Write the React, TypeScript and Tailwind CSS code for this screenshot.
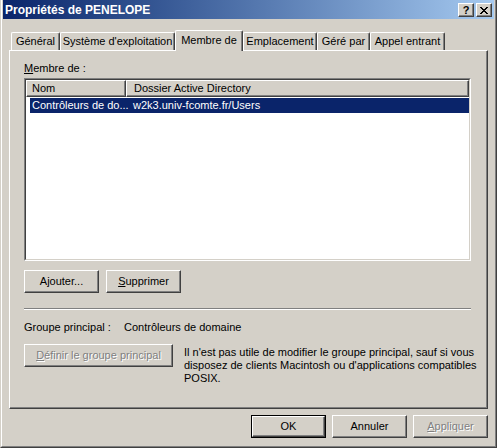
import React from "react";

const raised =
  "border border-t-white border-l-white border-r-[#404040] border-b-[#404040] shadow-[inset_-1px_-1px_0_#808080]";

function Btn({
  children,
  w = "w-[75px]",
  def = false,
  disabled = false,
}: {
  children: React.ReactNode;
  w?: string;
  def?: boolean;
  disabled?: boolean;
}) {
  const inner = (
    <div
      className={`h-full w-full flex items-center justify-center bg-[#d4d0c8] ${raised} ${
        disabled ? "text-[#808080] [text-shadow:1px_1px_0_#ffffff]" : "text-black"
      }`}
    >
      {children}
    </div>
  );
  if (def) {
    return <div className={`${w} h-[23px] border border-black`}>{inner}</div>;
  }
  return <div className={`${w} h-[23px]`}>{inner}</div>;
}

function Tab({
  label,
  w,
  selected = false,
}: {
  label: string;
  w: string;
  selected?: boolean;
}) {
  if (selected) {
    return (
      <div
        className={`${w} h-[21px] -mb-[1px] relative z-10 bg-[#d4d0c8] border-l border-t border-r border-l-white border-t-white border-r-[#404040] rounded-tl-[2px] rounded-tr-[2px] shadow-[inset_-1px_0_0_#808080] flex items-start justify-center pt-[3px]`}
      >
        {label}
      </div>
    );
  }
  return (
    <div
      className={`${w} h-[18px] mt-[2px] bg-[#d4d0c8] border-l border-t border-r border-l-white border-t-white border-r-[#404040] rounded-tl-[2px] rounded-tr-[2px] shadow-[inset_-1px_0_0_#808080] flex items-start justify-center pt-[2px]`}
    >
      {label}
    </div>
  );
}

export default function App() {
  return (
    <div className="w-[497px] h-[448px] bg-[#d4d0c8] overflow-hidden font-['Liberation_Sans',Arial,sans-serif] text-[11px] leading-[13px] text-black select-none">
      <div className="w-full h-full border-r border-b border-r-[#404040] border-b-[#404040] border-l border-l-[#d4d0c8]">
        <div className="w-full h-full border-r border-b border-l border-r-[#808080] border-b-[#808080] border-l-white pl-[1px] pr-[1px] flex flex-col">
          {/* title bar */}
          <div className="h-[19px] w-full bg-gradient-to-r from-[#0a246a] to-[#a6caf0] flex items-center pl-[2px] pr-[2px]">
            <div className="text-white font-bold text-[12px] flex-1 pt-[1px]">Propriétés de PENELOPE</div>
            <div className="flex gap-[2px] mt-[1px]">
              <div className={`w-[16px] h-[14px] bg-[#d4d0c8] ${raised} flex items-center justify-center font-bold text-[11px] leading-[11px] text-black`}>
                ?
              </div>
              <div className={`w-[16px] h-[14px] bg-[#d4d0c8] ${raised} flex items-center justify-center`}>
                <svg width="8" height="7" viewBox="0 0 8 7" shapeRendering="crispEdges">
                  <path d="M0 0h2v1H0zM6 0h2v1H6zM1 1h2v1H1zM5 1h2v1H5zM2 2h4v1H2zM3 3h2v1H3zM2 4h4v1H2zM1 5h2v1H1zM5 5h2v1H5zM0 6h2v1H0zM6 6h2v1H6z" fill="#000" />
                </svg>
              </div>
            </div>
          </div>

          {/* tabs + panel */}
          <div className="pl-[6px] mt-[11px]">
            <div className="flex h-[20px] items-end pl-[2px]">
              <Tab label="Général" w="w-[49px]" />
              <Tab label="Système d'exploitation" w="w-[115px]" />
              <Tab label="Membre de" w="w-[68px]" selected />
              <Tab label="Emplacement" w="w-[74px]" />
              <Tab label="Géré par" w="w-[53px]" />
              <Tab label="Appel entrant" w="w-[75px]" />
            </div>
            <div className="w-[479px] h-[359px] border border-t-white border-l-white border-r-[#404040] border-b-[#404040] shadow-[inset_-1px_-1px_0_#808080] pl-[14px] flex flex-col">
              <div className="mt-[11px] h-[13px]">
                <span className="underline underline-offset-[1px]">M</span>embre de :
              </div>
              {/* list view */}
              <div className="mt-[3px] w-[447px] h-[183px] border border-t-[#808080] border-l-[#808080] border-r-white border-b-white">
                <div className="w-full h-full border border-t-[#404040] border-l-[#404040] border-r-[#d4d0c8] border-b-[#d4d0c8] bg-white flex flex-col">
                  <div className="flex h-[17px] shrink-0">
                    <div className={`w-[100px] h-full bg-[#d4d0c8] ${raised} pl-[5px] pt-[1px]`}>Nom</div>
                    <div className={`flex-1 h-full bg-[#d4d0c8] ${raised} pl-[7px] pt-[1px]`}>Dossier Active Directory</div>
                  </div>
                  <div className="flex h-[15px] mt-[1px] ml-[4px] bg-[#0a246a] text-white items-center">
                    <div className="w-[102px] pl-[2px] whitespace-nowrap overflow-hidden">Contrôleurs de do...</div>
                    <div className="pl-[1px] whitespace-nowrap">w2k3.univ-fcomte.fr/Users</div>
                  </div>
                </div>
              </div>
              <div className="flex gap-[7px] mt-[9px]">
                <Btn>
                  <span>
                    A<span className="underline underline-offset-[1px]">j</span>outer...
                  </span>
                </Btn>
                <Btn>
                  <span>
                    <span className="underline underline-offset-[1px]">S</span>upprimer
                  </span>
                </Btn>
              </div>
              <div className="mt-[15px] w-[447px] h-[2px] border-t border-t-[#808080] border-b border-b-white" />
              <div className="mt-[11px] flex h-[13px]">
                <div className="w-[100px]">Groupe principal :</div>
                <div>Contrôleurs de domaine</div>
              </div>
              <div className="mt-[10px] flex">
                <Btn w="w-[149px]" disabled>
                  <span>
                    <span className="underline underline-offset-[1px]">D</span>éfinir le groupe principal
                  </span>
                </Btn>
                <div className="ml-[11px] w-[300px] pt-[2px] leading-[13px]">
                  Il n'est pas utile de modifier le groupe principal, sauf si vous disposez de clients Macintosh ou d'applications compatibles POSIX.
                </div>
              </div>
            </div>
          </div>

          {/* bottom buttons */}
          <div className="flex justify-end gap-[6px] mt-[6px] pr-[6px]">
            <Btn def>OK</Btn>
            <Btn>Annuler</Btn>
            <Btn disabled>
              <span>
                <span className="underline underline-offset-[1px]">A</span>ppliquer
              </span>
            </Btn>
          </div>
        </div>
      </div>
    </div>
  );
}
